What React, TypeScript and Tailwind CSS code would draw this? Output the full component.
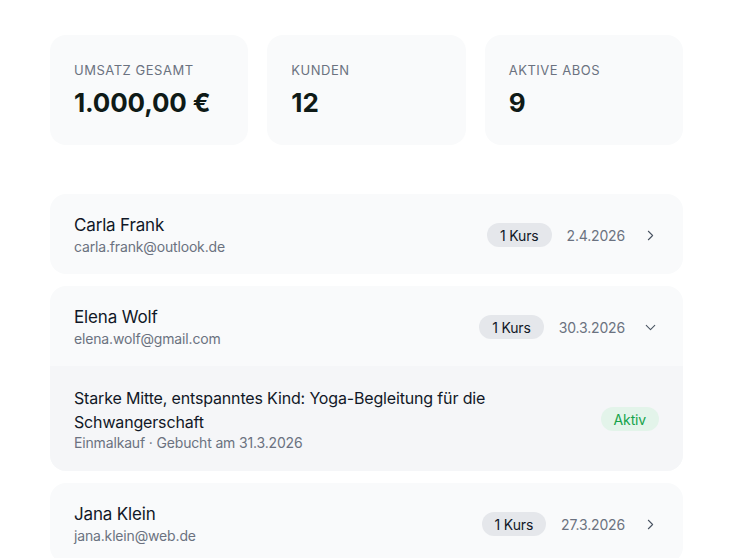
import React from 'react';
import { ChevronRight, ChevronDown } from 'lucide-react';

const STATS = [
  { label: 'Umsatz gesamt', value: '1.000,00 €' },
  { label: 'Kunden', value: '12' },
  { label: 'Aktive Abos', value: '9' },
];

type Customer = {
  name: string;
  email: string;
  courses: string;
  date: string;
  open?: boolean;
};

const CUSTOMERS: Customer[] = [
  { name: 'Carla Frank', email: 'carla.frank@outlook.de', courses: '1 Kurs', date: '2.4.2026' },
  { name: 'Elena Wolf', email: 'elena.wolf@gmail.com', courses: '1 Kurs', date: '30.3.2026', open: true },
  { name: 'Jana Klein', email: 'jana.klein@web.de', courses: '1 Kurs', date: '27.3.2026' },
];

const CustomerRow: React.FC<{ customer: Customer }> = ({ customer }) => (
  <div className="bg-[#f9fafb] rounded-2xl overflow-hidden">
    <div className="flex items-center justify-between pl-6 pr-[23px] pt-[19px] pb-[17px]">
      <div className="flex flex-col">
        <span className="text-[17px] leading-6 text-[#111827]">{customer.name}</span>
        <span className="text-[14px] leading-5 text-[#6b7280]">{customer.email}</span>
      </div>
      <div className="flex items-center">
        <span className="bg-[#e5e7eb] rounded-full px-[13px] h-6 flex items-center text-[14px] text-[#111827]">
          {customer.courses}
        </span>
        <span className="ml-[15px] text-[14px] text-[#6b7280]">{customer.date}</span>
        <span className="ml-[15px] w-5 flex justify-center text-[#4b5563]">
          {customer.open ? <ChevronDown size={17} strokeWidth={1.5} /> : <ChevronRight size={17} strokeWidth={1.5} />}
        </span>
      </div>
    </div>
    {customer.open && (
      <div className="bg-[#f5f6f8] flex items-center justify-between px-6 pt-5 pb-[19px]">
        <div className="flex flex-col max-w-[440px]">
          <span className="text-[16px] leading-6 text-[#111827]">
            Starke Mitte, entspanntes Kind: Yoga-Begleitung für die Schwangerschaft
          </span>
          <span className="text-[14px] leading-[18px] text-[#6b7280]">Einmalkauf · Gebucht am 31.3.2026</span>
        </div>
        <span className="bg-[#e3f4ea] text-[#16a34a] rounded-full px-[13px] h-6 flex items-center text-[14px]">Aktiv</span>
      </div>
    )}
  </div>
);

export default function App() {
  return (
    <div className="min-h-screen bg-white pl-[50px] pr-[49px] pt-[35px] font-['Inter',sans-serif] tracking-[-0.01em]">
      <div className="grid grid-cols-3 gap-[19px]">
        {STATS.map((s) => (
          <div key={s.label} className="bg-[#f9fafb] rounded-2xl h-[110px] px-6 pt-[25px]">
            <div className="text-[13px] leading-5 uppercase tracking-[0.04em] text-[#6b7280]">{s.label}</div>
            <div className="mt-[7px] text-[26px] leading-8 font-bold text-[#0f1a17]">{s.value}</div>
          </div>
        ))}
      </div>
      <div className="mt-[49px] flex flex-col gap-3">
        {CUSTOMERS.map((c) => (
          <CustomerRow key={c.email} customer={c} />
        ))}
      </div>
    </div>
  );
}
